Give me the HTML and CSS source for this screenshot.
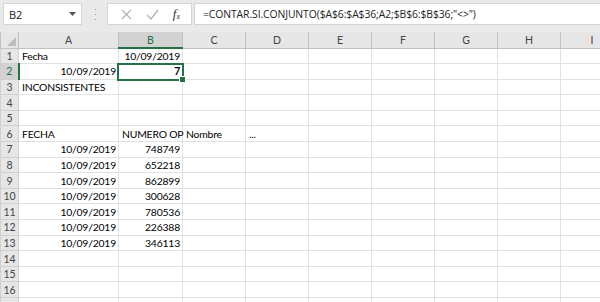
FILE: index.html
```html
<!DOCTYPE html>
<html lang="es">
<head>
<meta charset="UTF-8" />
<meta name="viewport" content="width=device-width, initial-scale=1" />
<title>Libro1 - Excel</title>
<link rel="stylesheet" href="styles.css">
</head>
<body>

<div class="toolbar">
  <div class="namebox">
    <span>B2</span>
    <svg class="drop" width="7" height="4" viewBox="0 0 7 4"><path d="M0 0h7L3.5 4z" fill="#555"/></svg>
  </div>
  <svg class="grip" width="3" height="11" viewBox="0 0 3 11">
    <rect x="1" y="0" width="1" height="1" fill="#999"/>
    <rect x="1" y="5" width="1" height="1" fill="#999"/>
    <rect x="1" y="10" width="1" height="1" fill="#999"/>
  </svg>
  <div class="fxbox">
    <svg width="11" height="11" viewBox="0 0 11 11"><path d="M1 1l9 9M10 1l-9 9" stroke="#b3b3b3" stroke-width="1.2"/></svg>
    <svg width="13" height="11" viewBox="0 0 13 11"><path d="M1 6l4 4 7-9" stroke="#b3b3b3" stroke-width="1.3" fill="none"/></svg>
    <span class="fx"><i>f</i><sub>x</sub></span>
  </div>
  <div class="formula">=CONTAR.SI.CONJUNTO($A$6:$A$36;A2;$B$6:$B$36;"&lt;&gt;")</div>
</div>

<table class="sheet">
  <colgroup>
    <col class="c-row"><col class="c-a"><col class="c-b"><col><col><col><col><col><col><col class="c-i">
  </colgroup>
  <tr class="heads">
    <th class="corner"><svg width="9" height="9" viewBox="0 0 9 9"><path d="M9 0v9H0z" fill="#bdbdbd"/></svg></th>
    <th>A</th><th class="sel">B</th><th>C</th><th>D</th><th>E</th><th>F</th><th>G</th><th>H</th><th>I</th>
  </tr>
  <tr><th>1</th><td>Fecha</td><td class="r">10/09/2019</td><td></td><td></td><td></td><td></td><td></td><td></td><td></td></tr>
  <tr><th class="sel">2</th><td class="r">10/09/2019</td><td class="r b active">7<div class="cursor"><span class="handle"></span></div></td><td></td><td></td><td></td><td></td><td></td><td></td><td></td></tr>
  <tr><th>3</th><td class="wide">INCONSISTENTES</td><td></td><td></td><td></td><td></td><td></td><td></td><td></td><td></td></tr>
  <tr><th>4</th><td></td><td></td><td></td><td></td><td></td><td></td><td></td><td></td><td></td></tr>
  <tr><th>5</th><td></td><td></td><td></td><td></td><td></td><td></td><td></td><td></td><td></td></tr>
  <tr><th>6</th><td>FECHA</td><td class="wide">NUMERO OP</td><td>Nombre</td><td>...</td><td></td><td></td><td></td><td></td><td></td></tr>
  <tr><th>7</th><td class="r">10/09/2019</td><td class="r">748749</td><td></td><td></td><td></td><td></td><td></td><td></td><td></td></tr>
  <tr><th>8</th><td class="r">10/09/2019</td><td class="r">652218</td><td></td><td></td><td></td><td></td><td></td><td></td><td></td></tr>
  <tr><th>9</th><td class="r">10/09/2019</td><td class="r">862899</td><td></td><td></td><td></td><td></td><td></td><td></td><td></td></tr>
  <tr><th>10</th><td class="r">10/09/2019</td><td class="r">300628</td><td></td><td></td><td></td><td></td><td></td><td></td><td></td></tr>
  <tr><th>11</th><td class="r">10/09/2019</td><td class="r">780536</td><td></td><td></td><td></td><td></td><td></td><td></td><td></td></tr>
  <tr><th>12</th><td class="r">10/09/2019</td><td class="r">226388</td><td></td><td></td><td></td><td></td><td></td><td></td><td></td></tr>
  <tr><th>13</th><td class="r">10/09/2019</td><td class="r">346113</td><td></td><td></td><td></td><td></td><td></td><td></td><td></td></tr>
  <tr><th>14</th><td></td><td></td><td></td><td></td><td></td><td></td><td></td><td></td><td></td></tr>
  <tr><th>15</th><td></td><td></td><td></td><td></td><td></td><td></td><td></td><td></td><td></td></tr>
  <tr><th>16</th><td></td><td></td><td></td><td></td><td></td><td></td><td></td><td></td><td></td></tr>
  <tr><th></th><td></td><td></td><td></td><td></td><td></td><td></td><td></td><td></td><td></td></tr>
</table>

</body>
</html>
```

FILE: styles.css
```css
html, body { margin: 0; padding: 0; overflow: hidden; }
body { font-family: Lato, "Open Sans", sans-serif; font-size: 10.4px; letter-spacing: -0.2px; color: #000; background: #fff; width: 600px; height: 302px; }

/* formula bar */
.toolbar { display: flex; align-items: center; height: 32px; background: #e9e9e9; padding: 0 0 0 3px; box-sizing: border-box; letter-spacing: 0; }
.namebox {
  width: 79px; height: 22px; box-sizing: border-box; background: #fff; border: 1px solid #d4d4d4;
  display: flex; align-items: center; justify-content: space-between; padding: 0 5px 0 5px;
  font-family: "Open Sans", sans-serif; font-size: 11px; color: #222; margin-top: -4px;
}
.grip { margin: -4px 10px 0 12px; }
.fxbox {
  width: 85px; height: 22px; box-sizing: border-box; background: #fff; border: 1px solid #d4d4d4;
  display: flex; align-items: center; justify-content: space-around; padding: 0 4px 0 6px; margin-top: -4px;
}
.fx { font-family: "Liberation Serif", serif; font-size: 13px; color: #333; }
.fx sub { font-size: 8px; font-style: italic; vertical-align: -1px; }
.formula {
  flex: 1; height: 22px; box-sizing: border-box; margin: -4px 0 0 2px; background: #fff; border: 1px solid #d4d4d4; border-right: 0;
  padding: 3px 0 0 8px; font-family: "Open Sans", sans-serif; font-size: 10.4px; letter-spacing: -0.1px; color: #222; white-space: nowrap;
}

/* grid */
.sheet { border-collapse: collapse; table-layout: fixed; width: 620px; }
.sheet col { width: 63px; }
.sheet col.c-row { width: 18px; }
.sheet col.c-a { width: 100px; }
.sheet col.c-b { width: 64px; }
.sheet col.c-i { width: 63px; }
.sheet th, .sheet td { height: 15.6px; padding: 0 2px 0 3px; box-sizing: border-box; white-space: nowrap; overflow: hidden; line-height: 14px; }
.sheet td { border: 1px solid #e1e1e1; border-top: 0; }
.sheet th { background: #e6e6e6; color: #444; font-weight: normal; border: 1px solid #d0d0d0; border-top: 0; text-align: center; font-size: 10.5px; letter-spacing: 0; padding: 0; }
.heads th { height: 16px; border-color: #c2c2c2; border-top: 0; }
.heads th.corner { text-align: right; vertical-align: bottom; padding: 0 1px 0 0; }
.heads th.corner svg { display: block; margin: 0 1px 2px auto; }
th.sel { background: #d2d2d2; color: #217346; }
.heads th.sel { border-bottom: 2px solid #217346; }
tr th.sel:first-child { border-right: 2px solid #217346; }
td.r { text-align: right; }
td.b { font-weight: bold; }
td.wide { overflow: visible; }
td.active { position: relative; overflow: visible; }
.cursor { position: absolute; left: -2px; top: -1px; right: -2px; bottom: -2px; border: 2px solid #217346; }
.handle { position: absolute; right: -4px; bottom: -4px; width: 5px; height: 5px; background: #217346; border: 1px solid #fff; }
```
